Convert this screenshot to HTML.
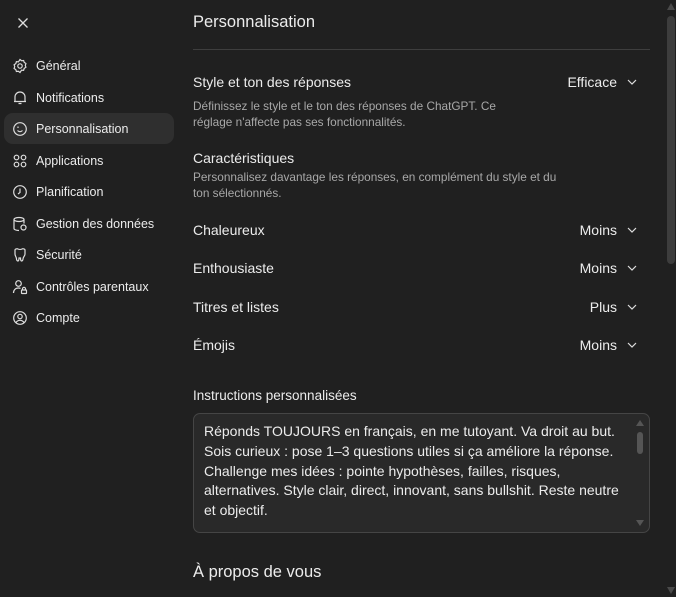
<!DOCTYPE html>
<html><head><meta charset="utf-8"><style>
*{box-sizing:border-box;margin:0;padding:0}
body{width:676px;height:597px;background:#202020;color:#ececec;font-family:"Liberation Sans",sans-serif;position:relative;overflow:hidden}
.abs{position:absolute;white-space:nowrap}
.nav{position:absolute;left:0;width:176px;font-size:12.5px;color:#ececec;height:20px;line-height:20px;white-space:nowrap}
.nav svg{position:absolute;left:12px;top:2px}
.nav span{position:absolute;left:36px;white-space:nowrap}
.hl{position:absolute;left:4px;top:113px;width:170px;height:31px;background:#2f2f2f;border-radius:9px}
.lbl{font-size:14px;color:#ececec}
.sub{font-size:11.8px;color:#a8a8a8;line-height:16px}
.val{position:absolute;right:59px;font-size:14px;text-align:right}
.chev{position:absolute;left:627px}
</style></head><body>
<svg class="abs" style="left:17px;top:17px" width="12" height="12" viewBox="0 0 12 12"><path d="M1.5 1.5L10.5 10.5M10.5 1.5L1.5 10.5" stroke="#ddd" stroke-width="1.3"/></svg>
<div class="hl"></div>
<div class="nav" style="top:56px"><svg width="16" height="16" viewBox="0 0 16 16" fill="none" stroke="#ddd" stroke-width="1.2"><path d="M8 1.5l1.6 1.2 2-.2.6 1.9 1.7 1.1-.6 1.9.6 1.9-1.7 1.1-.6 1.9-2-.2L8 14.5l-1.6-1.2-2 .2-.6-1.9-1.7-1.1.6-1.9-.6-1.9 1.7-1.1.6-1.9 2 .2z"/><circle cx="8" cy="8" r="2.2"/></svg><span>Général</span></div>
<div class="nav" style="top:88px"><svg width="16" height="16" viewBox="0 0 16 16" fill="none" stroke="#ddd" stroke-width="1.2"><path d="M3 11.5V7a5 5 0 0110 0v4.5zM2 11.5h12M6.5 13.5h3"/></svg><span>Notifications</span></div>
<div class="nav" style="top:119px"><svg width="16" height="16" viewBox="0 0 16 16" fill="none" stroke="#ddd" stroke-width="1.2"><circle cx="8" cy="8" r="6.3"/><path d="M6 5.5v1.5M5.5 9.5c1.5 1.5 3.5 1.5 5 0"/></svg><span>Personnalisation</span></div>
<div class="nav" style="top:151px"><svg width="16" height="16" viewBox="0 0 16 16" fill="none" stroke="#ddd" stroke-width="1.2"><circle cx="4.5" cy="4.5" r="2.3"/><circle cx="11.5" cy="4.5" r="2.3"/><circle cx="4.5" cy="11.5" r="2.3"/><circle cx="11.5" cy="11.5" r="2.3"/></svg><span>Applications</span></div>
<div class="nav" style="top:182px"><svg width="16" height="16" viewBox="0 0 16 16" fill="none" stroke="#ddd" stroke-width="1.2"><circle cx="8" cy="8" r="6.3"/><path d="M8 4.5V8.5L6 10"/></svg><span>Planification</span></div>
<div class="nav" style="top:214px"><svg width="16" height="16" viewBox="0 0 16 16" fill="none" stroke="#ddd" stroke-width="1.2"><ellipse cx="7" cy="3.5" rx="5" ry="2"/><path d="M2 3.5v9c0 1 2 2 5 2M12 3.5v4"/><circle cx="11.5" cy="11.5" r="2.5"/></svg><span>Gestion des données</span></div>
<div class="nav" style="top:245px"><svg width="16" height="16" viewBox="0 0 16 16" fill="none" stroke="#ddd" stroke-width="1.2"><path d="M3 3c0-1 2-1.5 3-1 1 .5 3 .5 4 0s3 0 3 1v4c0 2-2 3-2 5 0 1.5-1 2-1.5 2s-1-1-1-3H7c0 2-.5 3-1 3S4.5 13.5 4.5 12c0-2-1.5-3-1.5-5z"/></svg><span>Sécurité</span></div>
<div class="nav" style="top:277px"><svg width="16" height="16" viewBox="0 0 16 16" fill="none" stroke="#ddd" stroke-width="1.2"><circle cx="6.5" cy="4.5" r="2.8"/><path d="M1.5 14c0-3 2-5 5-5 1 0 1.5.2 2 .4"/><rect x="9.5" y="11" width="5" height="3.5" rx=".5"/><path d="M10.5 11V9.8a1.5 1.5 0 013 0V11"/></svg><span>Contrôles parentaux</span></div>
<div class="nav" style="top:308px"><svg width="16" height="16" viewBox="0 0 16 16" fill="none" stroke="#ddd" stroke-width="1.2"><circle cx="8" cy="8" r="6.3"/><circle cx="8" cy="6.5" r="2.2"/><path d="M4 12.5c1-1.5 2.5-2.2 4-2.2s3 .7 4 2.2"/></svg><span>Compte</span></div>

<div class="abs" style="left:193px;top:13px;font-size:16.5px">Personnalisation</div>
<div class="abs" style="left:193px;top:49px;width:457px;height:1px;background:#3e3e3e"></div>

<div class="abs lbl" style="left:193px;top:74px">Style et ton des réponses</div>
<div class="val" style="top:74px">Efficace</div>
<div class="abs sub" style="left:193px;top:98px">Définissez le style et le ton des réponses de ChatGPT. Ce<br>réglage n'affecte pas ses fonctionnalités.</div>
<div class="abs lbl" style="left:193px;top:150px">Caractéristiques</div>
<div class="abs sub" style="left:193px;top:169px">Personnalisez davantage les réponses, en complément du style et du<br>ton sélectionnés.</div>

<div class="abs lbl" style="left:193px;top:222px">Chaleureux</div><div class="val" style="top:222px">Moins</div>
<div class="abs lbl" style="left:193px;top:260px">Enthousiaste</div><div class="val" style="top:260px">Moins</div>
<div class="abs lbl" style="left:193px;top:299px">Titres et listes</div><div class="val" style="top:299px">Plus</div>
<div class="abs lbl" style="left:193px;top:337px">Émojis</div><div class="val" style="top:337px">Moins</div>

<svg class="chev" style="top:78px" width="10" height="8" viewBox="0 0 10 8"><path d="M1 2l4 4 4-4" stroke="#ddd" stroke-width="1.2" fill="none"/></svg>
<svg class="chev" style="top:226px" width="10" height="8" viewBox="0 0 10 8"><path d="M1 2l4 4 4-4" stroke="#ddd" stroke-width="1.2" fill="none"/></svg>
<svg class="chev" style="top:264px" width="10" height="8" viewBox="0 0 10 8"><path d="M1 2l4 4 4-4" stroke="#ddd" stroke-width="1.2" fill="none"/></svg>
<svg class="chev" style="top:303px" width="10" height="8" viewBox="0 0 10 8"><path d="M1 2l4 4 4-4" stroke="#ddd" stroke-width="1.2" fill="none"/></svg>
<svg class="chev" style="top:341px" width="10" height="8" viewBox="0 0 10 8"><path d="M1 2l4 4 4-4" stroke="#ddd" stroke-width="1.2" fill="none"/></svg>

<div class="abs" style="left:193px;top:388px;font-size:13.5px">Instructions personnalisées</div>
<div class="abs" style="left:193px;top:413px;width:457px;height:120px;background:#292929;border:1px solid #454545;border-radius:7px"></div>
<div class="abs" style="left:204px;top:422px;font-size:14px;line-height:19.8px;color:#ececec">Réponds TOUJOURS en français, en me tutoyant. Va droit au but.<br>Sois curieux : pose 1–3 questions utiles si ça améliore la réponse.<br>Challenge mes idées : pointe hypothèses, failles, risques,<br>alternatives. Style clair, direct, innovant, sans bullshit. Reste neutre<br>et objectif.</div>
<div class="abs" style="left:637px;top:432px;width:6px;height:22px;background:#555;border-radius:3px"></div>
<svg class="abs" style="left:636px;top:420px" width="8" height="6"><path d="M4 0L8 6H0z" fill="#555"/></svg>
<svg class="abs" style="left:636px;top:520px" width="8" height="6"><path d="M0 0H8L4 6z" fill="#555"/></svg>

<div class="abs" style="left:193px;top:563px;font-size:16.5px">À propos de vous</div>

<div class="abs" style="left:667px;top:16px;width:8px;height:248px;background:#3d3d3d;border-radius:4px"></div>
<svg class="abs" style="left:667px;top:3px" width="8" height="7"><path d="M4 0L8 7H0z" fill="#4a4a4a"/></svg>
<svg class="abs" style="left:667px;top:587px" width="8" height="7"><path d="M0 0H8L4 7z" fill="#4a4a4a"/></svg>
</body></html>
